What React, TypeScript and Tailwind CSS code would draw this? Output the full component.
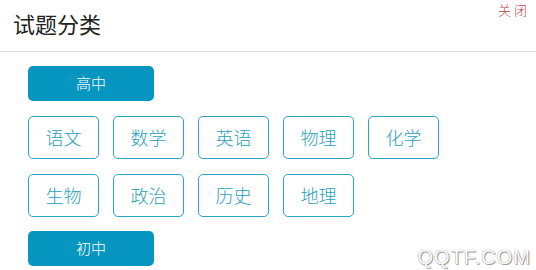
import React from 'react'

const HIGH = ['语文', '数学', '英语', '物理', '化学', '生物', '政治', '历史', '地理']

const font = { fontFamily: '"Microsoft YaHei", "Noto Sans CJK SC", sans-serif' }

const LevelPill: React.FC<{ label: string }> = ({ label }) => (
  <div className="flex items-center justify-center w-[126px] h-[35px] rounded-[5px] bg-[#0796c0] text-white text-[15px] font-light">
    {label}
  </div>
)

export default function App() {
  return (
    <div className="relative w-[536px] h-[270px] bg-white overflow-hidden" style={font}>
      <div className="flex items-start justify-between h-[52px] border-b border-[#e0e0e0]">
        <h1 className="pl-[13px] pt-[8px] text-[22px] leading-[30px] text-[#222]">试题分类</h1>
        <button type="button" className="pr-[6px] pt-[2px] text-[13px] leading-[16px] text-[#b84545] font-light tracking-[3px]">
          关闭
        </button>
      </div>

      <div className="flex flex-col gap-[15px] pl-[28px] pt-[14px]">
        <LevelPill label="高中" />
        <div className="grid grid-cols-[repeat(5,71px)] gap-x-[14px] gap-y-[15px]">
          {HIGH.map((s) => (
            <button
              key={s}
              type="button"
              className="flex items-center justify-center h-[43px] rounded-[5px] border border-[#2aa6c2] text-[#2a9fbd] text-[18px] font-light"
            >
              {s}
            </button>
          ))}
        </div>
        <div className="-mt-px">
          <LevelPill label="初中" />
        </div>
      </div>

      <span
        className="absolute right-[5px] bottom-[3px] text-[20px] leading-[20px] tracking-[1px] text-white"
        style={{ fontFamily: '"Liberation Sans", sans-serif', textShadow: '0 0 1px #777, 1px 1px 1px #999' }}
      >
        QQTF.COM
      </span>
    </div>
  )
}
